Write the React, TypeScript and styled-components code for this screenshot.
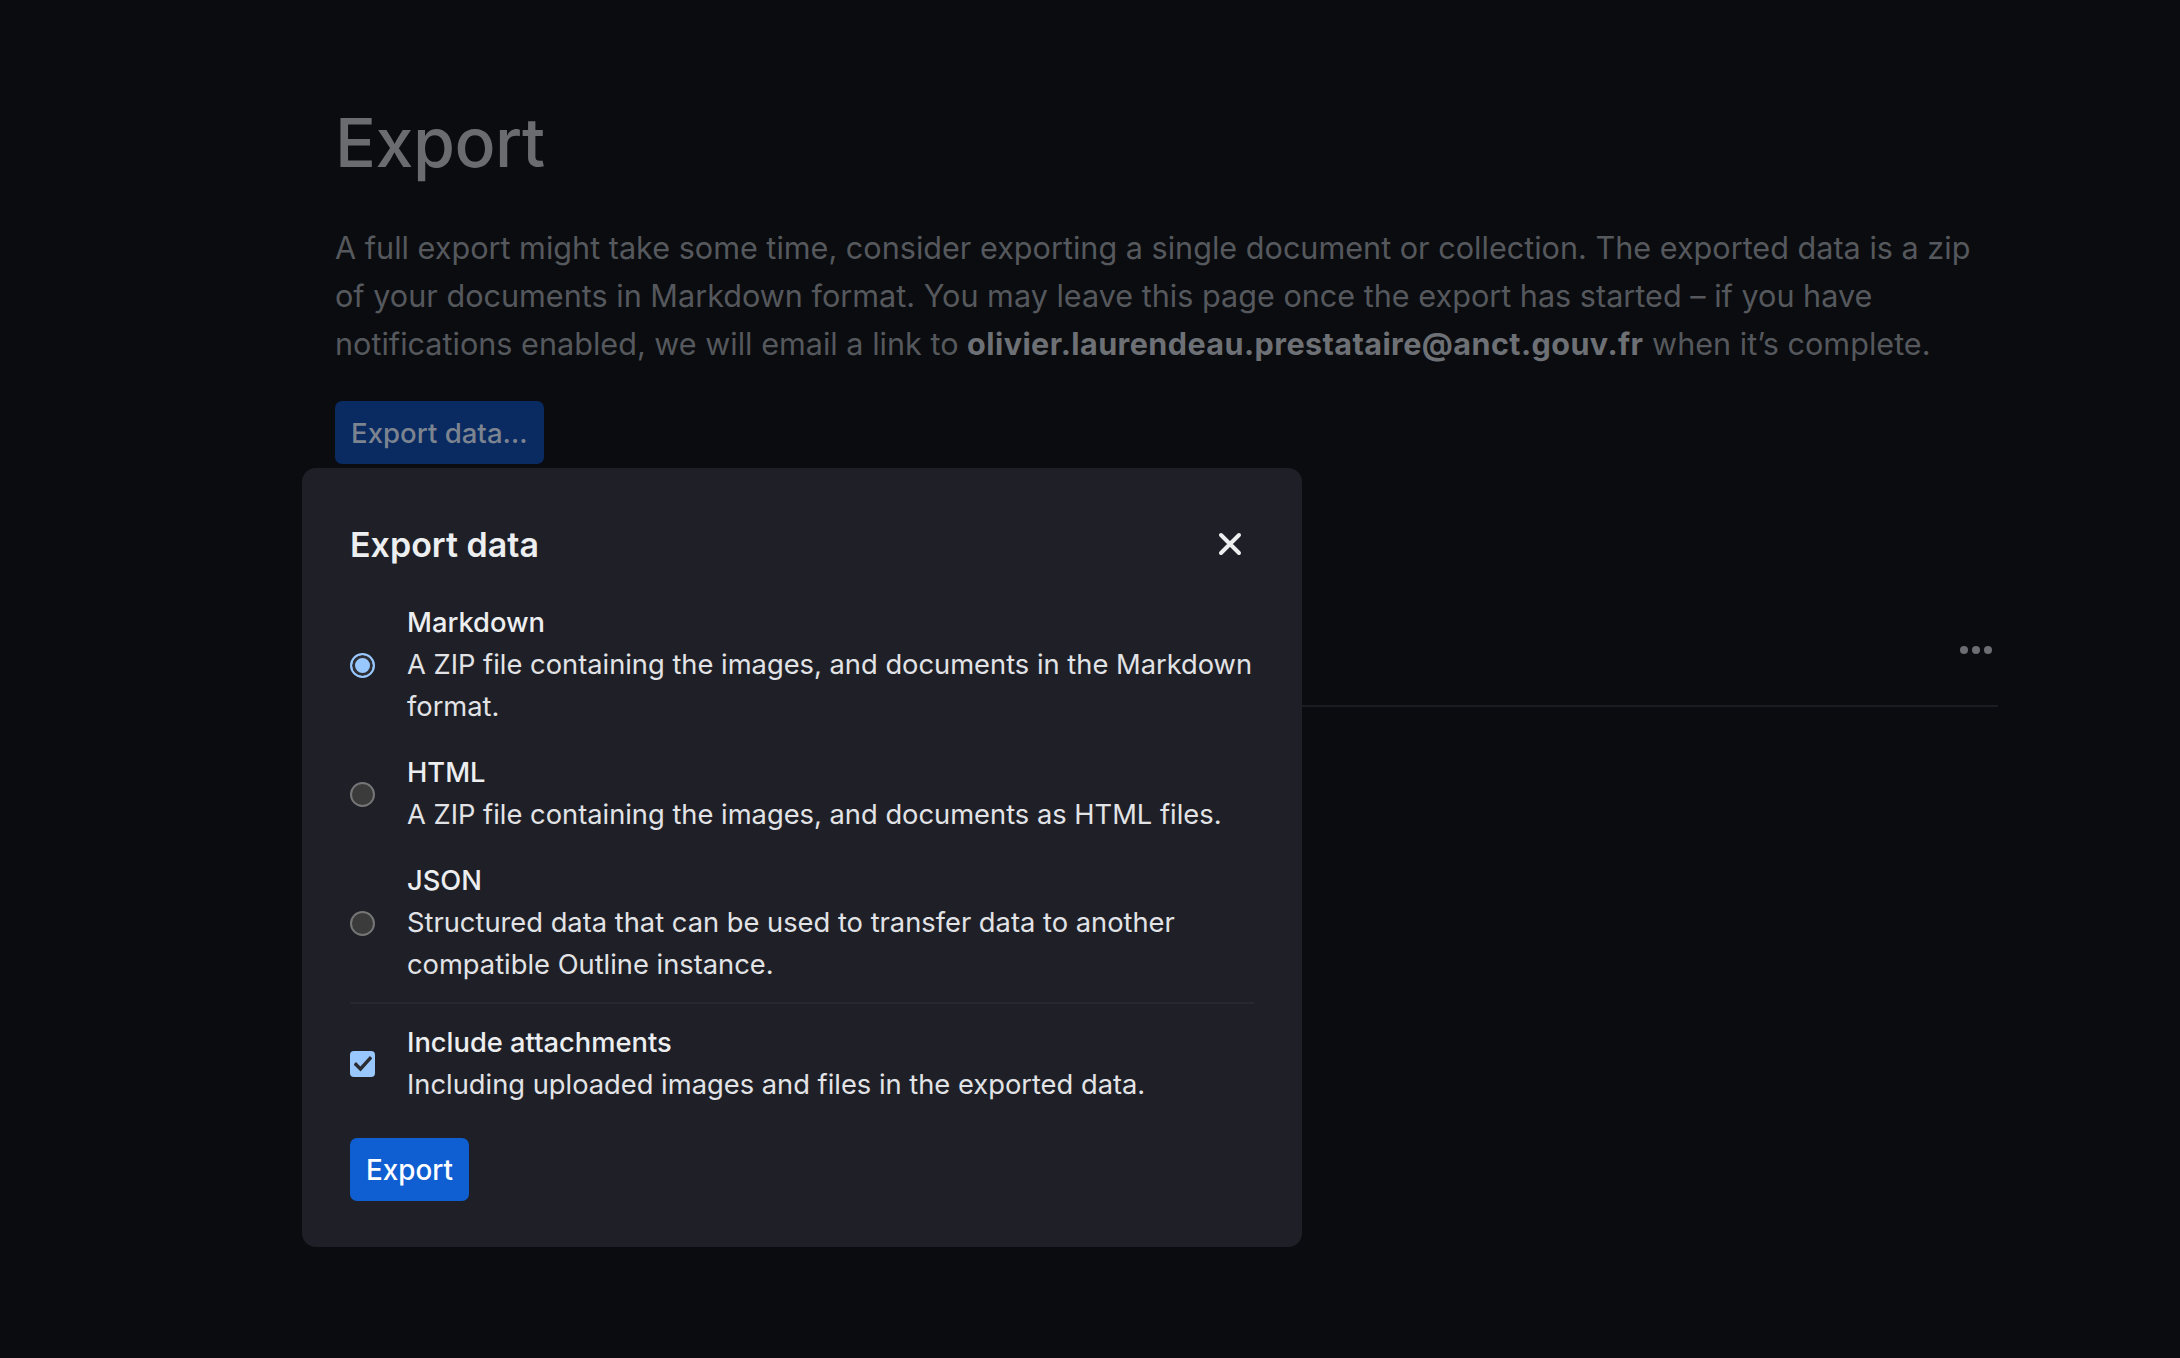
import styled, { createGlobalStyle } from "styled-components";

const GlobalStyle = createGlobalStyle`
  html, body {
    margin: 0;
    padding: 0;
    background: #0b0c0f;
  }
  body {
    font-family: Inter, "Noto Sans", sans-serif;
    -webkit-font-smoothing: antialiased;
  }
`;

const Page = styled.div`
  position: relative;
  min-height: 1358px;
  box-sizing: border-box;
  padding: 100px 0 0 335px;
`;

const Content = styled.main`
  width: 1663px;
`;

const Title = styled.h1`
  margin: 0;
  font-size: 68px;
  line-height: 84px;
  font-weight: 500;
  color: #6b6c6f;
  letter-spacing: -0.5px;
`;

const Intro = styled.p`
  margin: 40px 0 0;
  font-size: 30.6px;
  line-height: 48px;
  color: #55585d;

  strong {
    font-weight: 700;
    letter-spacing: 0.4px;
    color: #6d7075;
  }
`;

const GhostButton = styled.button`
  margin-top: 33px;
  height: 63px;
  padding: 0 16px;
  border: 0;
  border-radius: 7px;
  background: #0a2a62;
  color: #7c8490;
  font-family: inherit;
  font-size: 27.6px;
  font-weight: 500;
`;

const ExportRow = styled.div`
  display: flex;
  justify-content: flex-end;
  align-items: center;
  margin-top: 133px;
  height: 108px;
  border-bottom: 2px solid #1b1c22;
`;

const Dots = styled.div`
  display: flex;
  gap: 4px;
  margin-right: 6px;
  margin-top: -2px;
`;

const Dot = styled.span`
  width: 8px;
  height: 8px;
  border-radius: 50%;
  background: #6b6d72;
`;

const Modal = styled.section`
  position: absolute;
  left: 302px;
  top: 468px;
  width: 1000px;
  height: 779px;
  box-sizing: border-box;
  padding: 48px 48px;
  background: #1f2027;
  border-radius: 14px;
  color: #e6e7e9;
`;

const ModalHeader = styled.header`
  display: flex;
  justify-content: space-between;
  align-items: center;
  height: 56px;
`;

const ModalTitle = styled.h2`
  margin: 0;
  font-size: 34px;
  font-weight: 600;
  color: #eceef0;
`;

const CloseButton = styled.button`
  display: flex;
  align-items: center;
  justify-content: center;
  width: 40px;
  height: 40px;
  margin-right: 4px;
  padding: 0;
  border: 0;
  background: transparent;
  color: #eceef0;
`;

const Options = styled.div`
  display: flex;
  flex-direction: column;
  gap: 24px;
  margin-top: 30px;
`;

const Option = styled.label`
  display: flex;
  align-items: center;
  gap: 32px;
`;

const Radio = styled.span<{ $checked?: boolean }>`
  flex: none;
  width: 25px;
  height: 25px;
  box-sizing: border-box;
  border-radius: 50%;
  border: 2px solid ${(p) => (p.$checked ? "#99c8ff" : "#767676")};
  background: ${(p) => (p.$checked ? "#99c8ff" : "#3b3b3b")};
  box-shadow: ${(p) => (p.$checked ? "inset 0 0 0 3px #2e3036" : "none")};
`;

const Check = styled.span`
  flex: none;
  display: flex;
  align-items: center;
  justify-content: center;
  width: 25px;
  height: 26px;
  border-radius: 4px;
  background: #99c8ff;
`;

const OptionText = styled.div`
  display: flex;
  flex-direction: column;
  font-size: 27.3px;
  line-height: 42px;
`;

const OptionLabel = styled.span`
  font-weight: 500;
  color: #eceef0;
`;

const OptionDesc = styled.span`
  color: #e2e3e6;
`;

const Divider = styled.hr`
  margin: 16px 0 18px;
  border: 0;
  border-top: 2px solid #272830;
`;

const PrimaryButton = styled.button`
  margin-top: 32px;
  height: 63px;
  padding: 0 16px;
  border: 0;
  border-radius: 7px;
  background: #0f5fd2;
  color: #ffffff;
  font-family: inherit;
  font-size: 27.8px;
  font-weight: 500;
`;

const formats = [
  {
    name: "Markdown",
    desc: "A ZIP file containing the images, and documents in the Markdown format.",
    checked: true,
  },
  {
    name: "HTML",
    desc: "A ZIP file containing the images, and documents as HTML files.",
  },
  {
    name: "JSON",
    desc: "Structured data that can be used to transfer data to another compatible Outline instance.",
  },
];

function App() {
  return (
    <Page>
      <GlobalStyle />
      <Content>
        <Title>Export</Title>
        <Intro>
          A full export might take some time, consider exporting a single
          document or collection. The exported data is a zip of your documents
          in Markdown format. You may leave this page once the export has
          started – if you have notifications enabled, we will email a link to{" "}
          <strong>olivier.laurendeau.prestataire@anct.gouv.fr</strong> when
          it’s complete.
        </Intro>
        <GhostButton>Export data…</GhostButton>
        <ExportRow>
          <Dots>
            <Dot />
            <Dot />
            <Dot />
          </Dots>
        </ExportRow>
      </Content>

      <Modal>
        <ModalHeader>
          <ModalTitle>Export data</ModalTitle>
          <CloseButton aria-label="Close">
            <svg width="24" height="24" viewBox="0 0 24 24">
              <path
                d="M3 3L21 21M21 3L3 21"
                stroke="currentColor"
                strokeWidth="4"
                strokeLinecap="round"
              />
            </svg>
          </CloseButton>
        </ModalHeader>
        <Options>
          {formats.map((f) => (
            <Option key={f.name}>
              <Radio $checked={f.checked} />
              <OptionText>
                <OptionLabel>{f.name}</OptionLabel>
                <OptionDesc>{f.desc}</OptionDesc>
              </OptionText>
            </Option>
          ))}
        </Options>
        <Divider />
        <Option>
          <Check>
            <svg width="18" height="16" viewBox="0 0 18 16">
              <path
                d="M2 8.5L6.5 13L16 2.5"
                fill="none"
                stroke="#2b2d33"
                strokeWidth="3.4"
                strokeLinecap="square"
              />
            </svg>
          </Check>
          <OptionText>
            <OptionLabel>Include attachments</OptionLabel>
            <OptionDesc>
              Including uploaded images and files in the exported data.
            </OptionDesc>
          </OptionText>
        </Option>
        <PrimaryButton>Export</PrimaryButton>
      </Modal>
    </Page>
  );
}

export default App;
